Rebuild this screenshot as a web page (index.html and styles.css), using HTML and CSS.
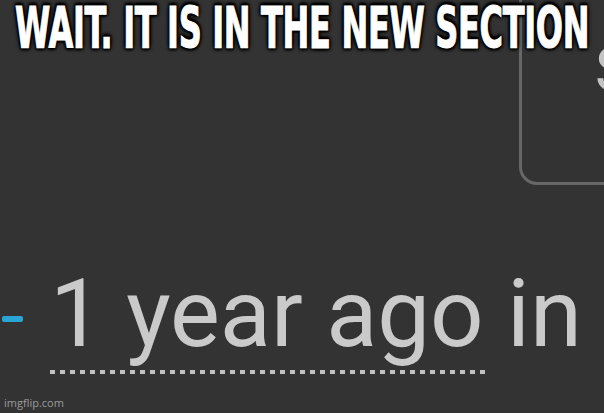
FILE: index.html
```html
<!DOCTYPE html>
<html>
<head>
<meta charset="utf-8">
<link rel="stylesheet" href="styles.css">
</head>
<body>
<div class="meme">
  <div class="shot">
    <div class="topbox"><span class="peek">S</span></div>
    <div class="line">
      <span class="dash"></span>
      <span class="ago"><span class="under">1 year ago</span> in</span>
    </div>
  </div>
  <div class="caption"><span class="capt">WAIT. IT IS IN THE NEW SECTION</span></div>
  <div class="watermark">imgflip.com</div>
</div>
</body>
</html>
```
FILE: styles.css
```css
html, body { margin: 0; padding: 0; background: #333333; }
.meme {
  position: relative;
  width: 604px;
  height: 413px;
  background: #333333;
  overflow: hidden;
}
.shot { display: flex; flex-direction: column; }
.topbox {
  margin-left: 519px;
  height: 185px;
  border-left: 3px solid #676767;
  border-bottom: 3px solid #676767;
  border-bottom-left-radius: 18px;
  box-sizing: border-box;
  padding: 39px 0 0 73px;
  overflow: hidden;
}
.peek {
  font-family: Roboto, sans-serif;
  font-size: 62px;
  line-height: 1;
  color: #c4c4c4;
}
.line {
  display: flex;
  align-items: flex-start;
  margin-top: 82px;
}
.dash {
  width: 21px;
  height: 6px;
  margin-top: 49px;
  margin-left: 2px;
  background: #2aa6d6;
  border-radius: 2px;
  margin-right: 27px;
}
.ago {
  font-family: Roboto, sans-serif;
  font-size: 94px;
  line-height: 1;
  color: #cacaca;
  white-space: pre;
}
.under {
  position: relative;
}
.under::after {
  content: "";
  position: absolute;
  left: 0;
  right: -3px;
  top: 111px;
  height: 4px;
  background: repeating-linear-gradient(to right, #c2c2c2 0 5px, transparent 5px 10px);
}
.caption {
  position: absolute;
  left: 0;
  top: 0;
  width: 604px;
  text-align: center;
  white-space: nowrap;
}
.capt {
  display: inline-block;
  font-family: "DejaVu Sans Condensed", "DejaVu Sans", sans-serif;
  font-weight: bold;
  font-size: 52px;
  line-height: 1;
  color: #ffffff;
  letter-spacing: -0.5px;
  -webkit-text-stroke: 1px #ffffff;
  transform: scale(0.685, 1.08);
  transform-origin: center top;
  margin: 0 -200px;
  text-shadow: 2px 2px 3px #000, -2px -2px 3px #000, 2px -2px 3px #000, -2px 2px 3px #000, 0 0 6px #000;
}
.watermark {
  position: absolute;
  left: 4px;
  bottom: 3px;
  font-family: "Open Sans", sans-serif;
  font-size: 11px;
  color: #9a9a9a;
}
```
